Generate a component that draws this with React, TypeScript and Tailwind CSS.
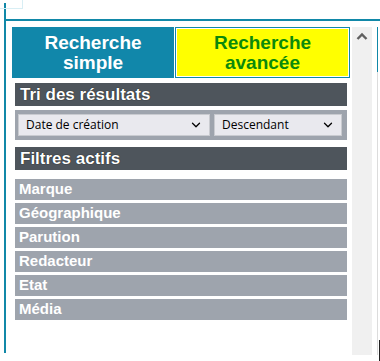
import { ChevronDown } from "lucide-react";

const filters = ["Marque", "Géographique", "Parution", "Redacteur", "Etat", "Média"];

function SelectBox({ label, width }: { label: string; width: string }) {
  return (
    <div
      className={`${width} h-[22px] flex items-center justify-between pl-[7px] pr-[6px] bg-[#e9e9ee] border border-[#c9cbd0] text-[12px] text-black`}
      style={{ fontFamily: '"Open Sans", "Noto Sans", sans-serif' }}
    >
      <span>{label}</span>
      <ChevronDown size={14} strokeWidth={2.2} />
    </div>
  );
}

function SectionHeader({ title }: { title: string }) {
  return (
    <div className="h-[23px] bg-[#4e555c] flex items-center pl-[5px] text-white font-bold text-[17px] [text-shadow:0_0_1px_#000]">
      {title}
    </div>
  );
}

export default function App() {
  return (
    <div
      className="relative w-[380px] h-[361px] bg-white overflow-hidden"
      style={{ fontFamily: '"Liberation Sans", Arial, sans-serif' }}
    >
      <div className="absolute left-0 top-0 w-[23px] h-[9px] border-r border-b border-[#d8eef4]" />

      <div className="pl-[4px] pt-[3px]">
        <div className="border-l-2 border-[#1188a8] h-[350px]">
          <div className="h-[16px]" />
          <div className="h-[2px] bg-[#1188a8]" />
          <div className="flex pl-[6px] pt-[6px]">
            {/* main panel */}
            <div className="w-[340px]">
              <div className="flex h-[51px]">
                <div className="w-[162px] bg-[#1187aa] flex items-center justify-center text-center text-white font-bold text-[19px] leading-[20px]">
                  Recherche
                  <br />
                  simple
                </div>
                <div className="ml-[1px] w-[175px] border border-[#1187aa] p-[1px]">
                  <div className="h-full bg-[#ffff00] flex items-center justify-center text-center text-[#0b8a0b] font-bold text-[19px] leading-[20px]">
                    Recherche
                    <br />
                    avancée
                  </div>
                </div>
              </div>

              <div className="mx-[3px] mt-[5px] w-[332px]">
                <SectionHeader title="Tri des résultats" />
                <div className="mt-[4px] h-[30px] bg-[#9ea4ad] flex items-center gap-[4px] pl-[3px]">
                  <SelectBox label="Date de création" width="w-[192px]" />
                  <SelectBox label="Descendant" width="w-[128px]" />
                </div>

                <div className="mt-[7px]">
                  <SectionHeader title="Filtres actifs" />
                </div>

                <div className="mt-[9px] flex flex-col gap-[3px]">
                  {filters.map((f) => (
                    <div
                      key={f}
                      className="h-[21px] bg-[#9ea4ad] flex items-center pl-[4px] text-white font-bold text-[15px]"
                    >
                      {f}
                    </div>
                  ))}
                </div>
              </div>
            </div>

            {/* scrollbar */}
            <div className="w-[20px] h-[328px] bg-[#f0f0f0] flex justify-center pt-[5px]">
              <svg width="12" height="8" viewBox="0 0 12 8">
                <path d="M1.5 7 L6 2.5 L10.5 7" fill="none" stroke="#606060" strokeWidth="2.4" />
              </svg>
            </div>

            <div className="ml-[5px] w-[1px] h-[328px] flex flex-col">
              <div className="h-[45px] bg-[#1188a8]" />
              <div className="flex-1 bg-[#dcdcdc]" />
            </div>
          </div>
        </div>
      </div>

      <div className="absolute right-0 bottom-0 w-[1px] h-[21px] bg-[#222]" />
    </div>
  );
}
